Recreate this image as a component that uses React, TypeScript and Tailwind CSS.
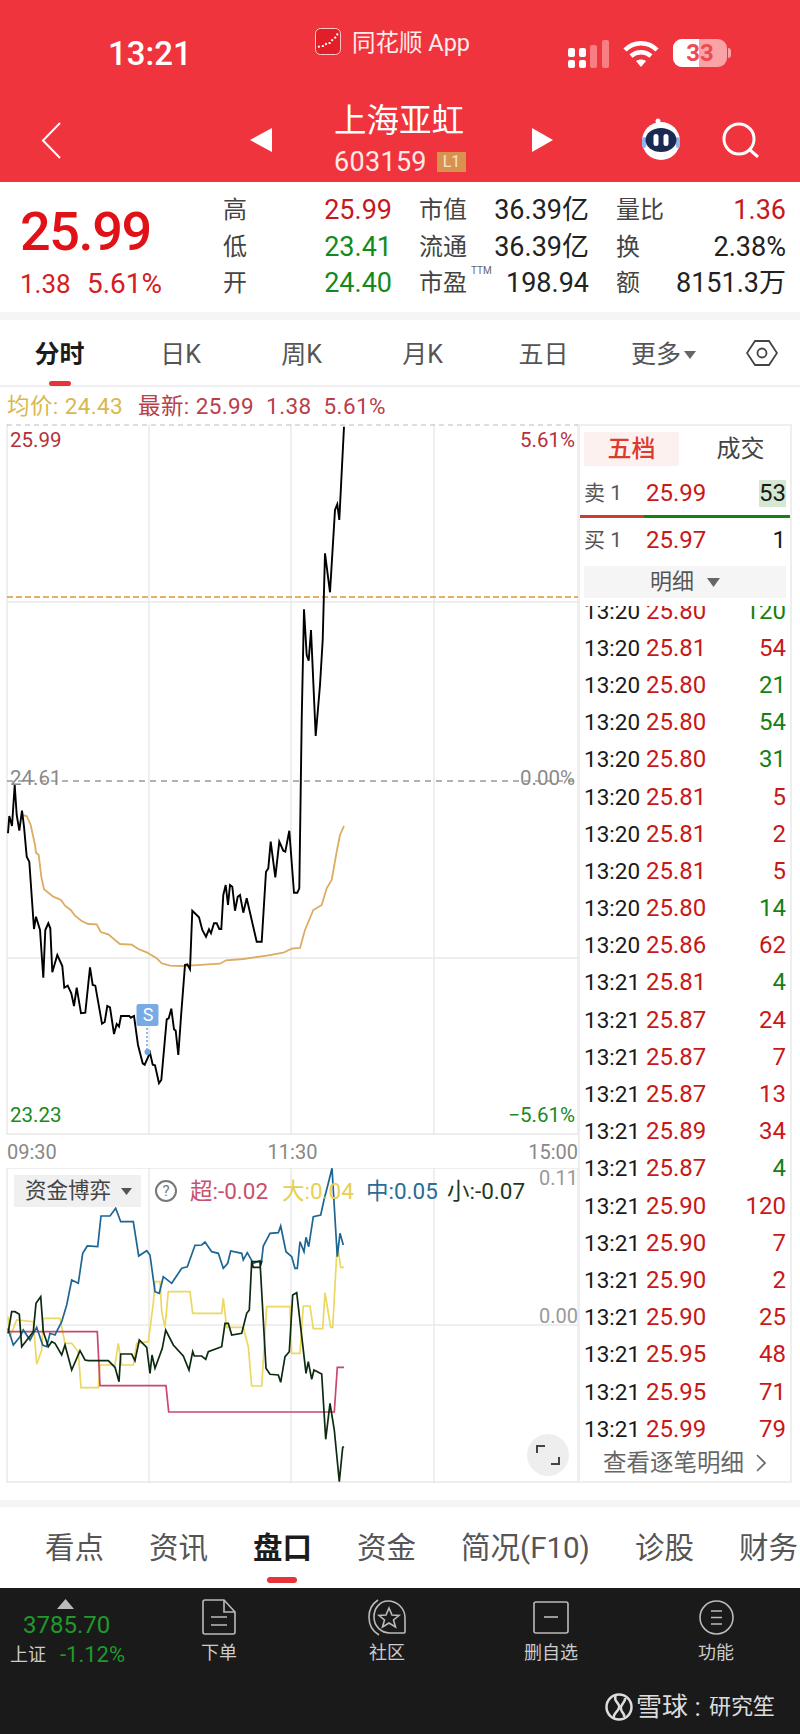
import React from 'react';

const FONT = 'font-["Roboto","Noto_Sans_CJK_SC",sans-serif]';

// traced from the picture, [x, y] in 3x crop coordinates
type Pt = number[];
const toPts = (arr: Pt[], oy: number) => arr.map(([x, y]) => `${(x / 3).toFixed(1)},${(y / 3 + oy).toFixed(1)}`).join(' ');

const priceLow: Pt[] = [[24,340],[28,288],[36,318],[44,195],[50,285],[58,332],[66,272],[72,320],[80,410],[88,425],[102,627],[108,590],[120,630],[130,773],[136,630],[145,610],[151,625],[157,757],[172,705],[187,738],[193,803],[203,797],[214,820],[222,858],[230,803],[243,880],[256,878],[270,742],[278,795],[286,797],[306,911],[314,906],[322,858],[330,862],[342,942],[350,912],[357,920],[363,888],[388,888],[392,893],[402,888],[414,975],[428,1030],[434,1034],[450,998],[458,1034],[465,1036],[477,1090],[484,1080],[500,898],[506,895],[514,866],[522,928],[527,932],[535,1005],[543,890],[555,735],[562,733],[570,748],[577,572],[597,592],[607,630],[618,650],[627,628],[633,640],[642,610],[650,610],[658,627],[664,627],[670,525],[677,495],[684,555],[690,495],[697,500],[705,572],[713,530],[720,525],[730,578],[740,535],[770,665],[785,665],[798,455],[805,445],[812,365],[826,472],[838,365],[850,392],[856,395],[868,332],[882,518],[892,518],[898,505],[905,0]];
const priceHigh: Pt[] = [[905,1200],[912,868],[920,1005],[926,1022],[933,930],[947,1248],[960,1095],[968,960],[975,700],[990,817],[1005,570],[1012,553],[1018,600],[1032,320]];
const avgLine: Pt[] = [[66,285],[80,288],[92,315],[105,375],[108,398],[116,405],[124,470],[132,508],[160,530],[183,540],[195,557],[212,570],[225,587],[245,603],[265,612],[290,613],[302,636],[325,643],[345,660],[360,672],[395,674],[415,687],[440,697],[470,715],[485,730],[510,737],[550,738],[580,736],[660,731],[678,721],[730,717],[800,707],[850,698],[875,686],[900,684],[915,630],[940,570],[965,555],[980,505],[995,480],[1010,395],[1020,345],[1032,318]];

const flowBlue: Pt[] = [[24,625],[40,675],[60,650],[70,630],[90,660],[110,622],[128,675],[140,680],[150,640],[165,645],[185,605],[200,555],[215,480],[235,490],[248,400],[262,378],[293,380],[303,288],[330,288],[347,265],[362,305],[400,305],[416,408],[440,392],[450,405],[465,515],[478,520],[490,470],[515,490],[545,445],[562,440],[585,376],[605,375],[615,366],[635,395],[655,400],[670,445],[683,430],[692,393],[725,400],[730,420],[742,398],[760,430],[785,420],[790,378],[810,340],[835,338],[842,318],[858,395],[875,410],[885,445],[892,445],[900,365],[912,395],[918,352],[926,380],[940,290],[962,285],[972,240],[985,190],[996,145],[1012,410],[1020,340],[1030,375]];
const flowYellow: Pt[] = [[24,590],[30,650],[50,600],[100,605],[110,733],[125,690],[130,595],[180,595],[195,670],[215,670],[235,695],[243,803],[295,803],[300,735],[345,735],[355,670],[365,735],[400,735],[410,670],[445,665],[460,550],[465,485],[480,485],[485,575],[495,622],[505,515],[570,515],[578,580],[665,580],[670,535],[680,622],[730,622],[745,680],[755,798],[785,798],[800,560],[870,560],[875,700],[900,700],[910,558],[930,558],[940,626],[968,626],[975,518],[992,622],[998,622],[1012,370],[1022,442],[1032,442]];
const flowPink: Pt[] = [[24,635],[292,635],[300,797],[498,797],[506,876],[1003,876],[1012,742],[1032,742]];
const flowBlack: Pt[] = [[24,640],[35,575],[45,575],[58,583],[65,680],[100,635],[108,550],[122,530],[130,635],[145,680],[155,665],[165,670],[185,705],[195,675],[215,750],[240,692],[255,720],[265,722],[325,722],[345,742],[357,785],[362,702],[395,702],[405,722],[418,660],[440,682],[450,760],[456,705],[465,745],[487,685],[497,630],[520,675],[550,708],[567,750],[578,695],[583,708],[605,708],[617,718],[625,695],[665,680],[675,610],[685,610],[695,645],[725,640],[740,580],[748,570],[755,425],[785,425],[780,442],[760,442],[755,425],[780,425],[798,745],[810,763],[835,765],[842,787],[855,710],[868,695],[878,525],[890,518],[918,760],[925,725],[935,778],[942,750],[965,762],[977,958],[990,850],[1003,930],[1018,1085],[1028,982],[1032,980]];

const ticks: [string, string, string, 'r' | 'g'][] = [
  ['13:20','25.80','120','g'],['13:20','25.81','54','r'],['13:20','25.80','21','g'],['13:20','25.80','54','g'],
  ['13:20','25.80','31','g'],['13:20','25.81','5','r'],['13:20','25.81','2','r'],['13:20','25.81','5','r'],
  ['13:20','25.80','14','g'],['13:20','25.86','62','r'],['13:21','25.81','4','g'],['13:21','25.87','24','r'],
  ['13:21','25.87','7','r'],['13:21','25.87','13','r'],['13:21','25.89','34','r'],['13:21','25.87','4','g'],
  ['13:21','25.90','120','r'],['13:21','25.90','7','r'],['13:21','25.90','2','r'],['13:21','25.90','25','r'],
  ['13:21','25.95','48','r'],['13:21','25.95','71','r'],['13:21','25.99','79','r'],
];

function Header() {
  return (
    <div className="bg-[#f0343d] h-[182px] text-white">
      <div className="flex h-[100px] items-start">
        <span className="ml-[108px] mt-[36px] w-[207px] text-[33px] leading-[36px] font-medium">13:21</span>
        <svg width="26" height="27" viewBox="0 0 26 27" className="mt-[28px]">
          <rect x="0.5" y="0.5" width="25" height="26" rx="5" fill="#e21e28" stroke="#ffc9c9" />
          <path d="M3 19l3-1 3 0 3-3 3 0 3-4 3-2 2-4" stroke="#fff" strokeWidth="2" strokeDasharray="2 2" fill="none" />
        </svg>
        <span className="ml-[11px] mt-[28px] w-[216px] text-[23.5px] leading-[30px] text-[#ffecec]">同花顺 App</span>
        <svg width="42" height="28" viewBox="0 0 42 28" className="mt-[40px]">
          <rect x="0" y="8" width="7" height="9" rx="2" fill="#fff" />
          <rect x="11" y="8" width="7" height="9" rx="2" fill="#fff" />
          <rect x="0" y="20" width="7" height="8" rx="2" fill="#fff" />
          <rect x="11" y="20" width="7" height="8" rx="2" fill="#fff" />
          <rect x="22" y="5" width="7" height="23" rx="2" fill="#f77f84" />
          <rect x="34" y="0" width="7" height="28" rx="2" fill="#f77f84" />
        </svg>
        <svg width="36" height="28" viewBox="0 0 36 28" className="ml-[13px] mt-[40px]" fill="none" stroke="#fff" strokeWidth="4.5">
          <path d="M2 10c9-9 23-9 32 0" />
          <path d="M8 16c6-5 14-5 20 0" />
          <path d="M18 27l-5-6c3-2 7-2 10 0z" fill="#fff" stroke="none" />
        </svg>
        <div className="ml-[14px] mt-[39px] flex items-center">
          <div className="relative w-[54px] h-[28px] rounded-[9px] bg-[#f9a3a7] overflow-hidden">
            <div className="w-[26px] h-full bg-white" />
            <span className="absolute inset-0 flex items-center justify-center text-[24px] font-bold text-[#ee4a52]">33</span>
          </div>
          <div className="ml-[1px] w-[3px] h-[10px] rounded-r bg-[#f9a3a7]" />
        </div>
      </div>
      <div className="flex items-start h-[82px]">
        <svg width="20" height="37" viewBox="0 0 20 37" className="ml-[41px] mt-[22px]" fill="none" stroke="#fff" strokeWidth="2">
          <path d="M19 1L2 18.5 19 36" />
        </svg>
        <svg width="22" height="24" viewBox="0 0 22 24" className="ml-[189px] mt-[28px]"><path d="M22 0v24L0 12z" fill="#fff" /></svg>
        <div className="ml-[62px] w-[132px]">
          <div className="mt-[1px] h-[41px] text-[32.5px] leading-[40px] whitespace-nowrap">上海亚虹</div>
          <div className="flex items-center mt-[9px] h-[22px]">
            <span className="w-[103px] text-[27px] leading-[22px] text-[#ffe8e8] tracking-[0.3px]">603159</span>
            <span className="w-[29px] h-[20px] bg-[#d9924e] text-[#f8e3cb] text-[16px] leading-[20px] text-center">L1</span>
          </div>
        </div>
        <svg width="21" height="24" viewBox="0 0 21 24" className="ml-[66px] mt-[28px]"><path d="M0 0v24L21 12z" fill="#fff" /></svg>
        <svg width="46" height="42" viewBox="0 0 46 42" className="ml-[85px] mt-[18px]">
          <circle cx="20" cy="3" r="2.5" fill="#fff" />
          <path d="M20 3l3 6" stroke="#fff" strokeWidth="1.5" />
          <circle cx="23" cy="23" r="19" fill="#fff" />
          <rect x="4" y="19" width="4" height="11" rx="2" fill="#8fb5ec" />
          <rect x="38" y="19" width="4" height="11" rx="2" fill="#8fb5ec" />
          <ellipse cx="23" cy="22" rx="15.5" ry="12" fill="#1b2a52" />
          <rect x="15.5" y="16" width="5" height="12" rx="2.5" fill="#fff" />
          <rect x="25.5" y="16" width="5" height="12" rx="2.5" fill="#fff" />
        </svg>
        <svg width="38" height="36" viewBox="0 0 38 36" className="ml-[38px] mt-[22px]" fill="none" stroke="#fff" strokeWidth="3">
          <circle cx="17" cy="17" r="15" />
          <path d="M28 28l8 7" />
        </svg>
      </div>
    </div>
  );
}

function Stat({ label, value, color, sup }: { label: string; value: string; color: string; sup?: boolean }) {
  return (
    <div className="relative flex items-center justify-between h-[36.5px]">
      <span className="text-[24px] leading-[30px] text-[#444]">{label}</span>
      {sup && <span className="absolute left-[52px] top-[0px] text-[10px] leading-[12px] text-[#666]">TTM</span>}
      <span className={`text-[27px] leading-[30px] ${color}`}>{value}</span>
    </div>
  );
}

function Quote() {
  return (
    <div className="flex h-[130px] bg-white">
      <div className="w-[223px] pl-[20px]">
        <div className="mt-[20px] h-[60px] text-[54px] leading-[60px] font-medium tracking-[-1.4px] text-[#e01218]">25.99</div>
        <div className="flex items-baseline mt-[6px] leading-[32px] text-[#d3201f]">
          <span className="w-[67px] text-[26px]">1.38</span>
          <span className="text-[28px]">5.61%</span>
        </div>
      </div>
      <div className="grid grid-cols-[169px_170px_170px] gap-x-[27px] pt-[10px] h-[120px]">
        <div>
          <Stat label="高" value="25.99" color="text-[#c41a1e]" />
          <Stat label="低" value="23.41" color="text-[#138a1e]" />
          <Stat label="开" value="24.40" color="text-[#138a1e]" />
        </div>
        <div>
          <Stat label="市值" value="36.39亿" color="text-[#222]" />
          <Stat label="流通" value="36.39亿" color="text-[#222]" />
          <Stat label="市盈" value="198.94" color="text-[#222]" sup />
        </div>
        <div>
          <Stat label="量比" value="1.36" color="text-[#c41a1e]" />
          <Stat label="换" value="2.38%" color="text-[#222]" />
          <Stat label="额" value="8151.3万" color="text-[#222]" />
        </div>
      </div>
    </div>
  );
}

function PeriodTabs() {
  const tabs = ['分时', '日K', '周K', '月K', '五日'];
  return (
    <div className="flex h-[67px] bg-white border-b-2 border-[#f0f0f0]">
      {tabs.map((t, i) => (
        <div key={t} className="relative w-[121px] flex items-start justify-center pt-[19px] pr-[2px]">
          <span className={i === 0 ? 'text-[25px] leading-[32px] font-bold text-[#1c1c1c]' : 'text-[25px] leading-[32px] text-[#555]'}>{t}</span>
          {i === 0 && <div className="absolute left-[49px] top-[61px] w-[22px] h-[5px] rounded-full bg-[#e5343a]" />}
        </div>
      ))}
      <div className="flex items-start pt-[19px] w-[141px] pl-[26px]">
        <span className="text-[25px] leading-[32px] text-[#555]">更多</span>
        <svg width="12" height="8" viewBox="0 0 12 8" className="ml-[3px] mt-[12px]"><path d="M0 0h12L6 8z" fill="#666" /></svg>
      </div>
      <svg width="32" height="28" viewBox="0 0 32 28" className="mt-[19px]" fill="none" stroke="#444" strokeWidth="1.8">
        <path d="M9 2h14l8 12-8 12H9L1 14z" />
        <circle cx="16" cy="14" r="4.5" />
      </svg>
    </div>
  );
}

function PriceChart() {
  return (
    <div className="relative h-[711px] w-[578px]">
      <svg width="578" height="711" viewBox="0 424 578 711" className="block">
        <g stroke="#e9e9e9" strokeWidth="1.4">
          <path d="M7 424V1135M149 424V1135M291 424V1135M434 424V1135M578 424V1135" />
          <path d="M7 602H578M7 958H578M7 1134H578" />
        </g>
        <path d="M7 425H578" stroke="#bbb" strokeWidth="1" strokeDasharray="5 4" />
        <path d="M7 781H578" stroke="#666" strokeWidth="1" strokeDasharray="6 5" />
        <path d="M7 597H578" stroke="#d9963a" strokeWidth="1.6" strokeDasharray="6 3" />
        <polyline points={toPts(avgLine, 720)} fill="none" stroke="#dcac62" strokeWidth="1.8" />
        <polyline points={toPts(priceLow, 720)} fill="none" stroke="#000" strokeWidth="1.9" />
        <polyline points={toPts(priceHigh, 320)} fill="none" stroke="#000" strokeWidth="1.9" />
        <path d="M147 1024V1052" stroke="#6fa4e2" strokeWidth="1.5" strokeDasharray="2 2" />
        <circle cx="147.500" cy="1052" r="3" fill="#6fa4e2" />
        <rect x="136.500" y="1004" width="22" height="22" rx="2" fill="#78aae6" />
      </svg>
      <span className="absolute left-[137px] top-[580px] w-[22px] h-[22px] text-center text-[18px] leading-[22px] text-white">S</span>
      <span className="absolute left-[10px] top-[4px] text-[20.5px] leading-[24px] text-[#b5303a]">25.99</span>
      <span className="absolute right-[3px] top-[4px] text-[20.5px] leading-[24px] text-[#b5303a]">5.61%</span>
      <span className="absolute left-[10px] top-[342px] text-[20.5px] leading-[24px] text-[#8a8a8a]">24.61</span>
      <span className="absolute right-[3px] top-[342px] text-[20.5px] leading-[24px] text-[#8a8a8a]">0.00%</span>
      <span className="absolute left-[10px] top-[679px] text-[20.5px] leading-[24px] text-[#1a8a24]">23.23</span>
      <span className="absolute right-[3px] top-[679px] text-[20.5px] leading-[24px] text-[#1a8a24]">−5.61%</span>
    </div>
  );
}

function FlowChart() {
  return (
    <div className="relative h-[315px] w-[578px]">
      <svg width="578" height="315" viewBox="0 1168 578 315" className="block">
        <g stroke="#e9e9e9" strokeWidth="1.4">
          <path d="M7 1168V1483M149 1168V1483M291 1168V1483M434 1168V1483M578 1168V1483" />
          <path d="M7 1325H578M7 1168H578M7 1482H578" />
        </g>
        <polyline points={toPts(flowYellow, 1120)} fill="none" stroke="#ecd860" strokeWidth="1.7" />
        <polyline points={toPts(flowPink, 1120)} fill="none" stroke="#c9486c" strokeWidth="1.7" />
        <polyline points={toPts(flowBlue, 1120)} fill="none" stroke="#1d6593" strokeWidth="1.7" />
        <polyline points={toPts(flowBlack, 1120)} fill="none" stroke="#0c2a10" strokeWidth="1.7" />
      </svg>
      <div className="absolute left-[14px] top-[7px] flex items-center">
        <div className="flex items-center w-[127px] h-[32px] bg-[#f0f0f0] pl-[11px]">
          <span className="text-[21.5px] leading-[32px] text-[#444] whitespace-nowrap">资金博弈</span>
          <svg width="11" height="7" viewBox="0 0 11 7" className="ml-[10px]"><path d="M0 0h11L5.500 7z" fill="#555" /></svg>
        </div>
        <div className="ml-[14px] w-[22px] h-[22px] rounded-full border-2 border-[#777] text-center text-[15px] leading-[18px] text-[#777]">?</div>
        <div className="flex text-[22.5px] leading-[28px] whitespace-nowrap">
          <span className="ml-[13px] w-[92px] text-[#c8506e]">超:-0.02</span>
          <span className="w-[84px] text-[#e6d052]">大:0.04</span>
          <span className="w-[81px] text-[#2b6c95]">中:0.05</span>
          <span className="text-[#1e3a20]">小:-0.07</span>
        </div>
      </div>
      <span className="absolute right-[0px] top-[-2px] text-[20px] leading-[24px] text-[#999]">0.11</span>
      <span className="absolute right-[0px] top-[136px] text-[20px] leading-[24px] text-[#999]">0.00</span>
      <button className="absolute left-[527px] top-[266px] w-[42px] h-[42px] rounded-full bg-[#eeeeee] flex items-center justify-center">
        <svg width="24" height="22" viewBox="0 0 24 22" fill="none" stroke="#444" strokeWidth="2">
          <path d="M1 9V2h8M23 13v7h-8" />
        </svg>
      </button>
    </div>
  );
}

function BookPanel() {
  return (
    <div className="w-[214px] h-[1059px] border-2 border-[#eeeeee] flex flex-col overflow-hidden">
      <div className="flex h-[40px] mt-[6px] pl-[4px]">
        <div className="w-[95px] h-[34px] bg-[#fdf1f0] text-center text-[24px] leading-[34px] font-medium text-[#dd3b30]">五档</div>
        <div className="w-[111px] pl-[12px] text-center text-[24px] leading-[34px] text-[#444]">成交</div>
      </div>
      <div className="flex items-center h-[42px] pl-[4px] pr-[4px]">
        <span className="w-[35px] text-[21px] leading-[30px] text-[#555] whitespace-nowrap">卖 1</span>
        <span className="ml-[27px] text-[24px] leading-[30px] text-[#c81818]">25.99</span>
        <span className="ml-auto w-[27px] bg-[#d4e8d4] text-right text-[24px] leading-[27px] text-[#1a1a1a]">53</span>
      </div>
      <div className="flex h-[3px] mt-[1px]">
        <div className="w-[64px] bg-[#d03a33]" />
        <div className="flex-1 bg-[#158015]" />
      </div>
      <div className="flex items-center h-[44px] pl-[4px] pr-[4px]">
        <span className="w-[35px] text-[21px] leading-[30px] text-[#555] whitespace-nowrap">买 1</span>
        <span className="ml-[27px] text-[24px] leading-[30px] text-[#c81818]">25.97</span>
        <span className="ml-auto text-[24px] leading-[30px] text-[#1a1a1a]">1</span>
      </div>
      <div className="flex items-center justify-center h-[32px] mx-[4px] bg-[#f5f5f5] mt-[4px]">
        <span className="text-[22px] leading-[30px] text-[#555]">明细</span>
        <svg width="13" height="9" viewBox="0 0 13 9" className="ml-[13px]"><path d="M0 0h13L6.500 9z" fill="#666" /></svg>
      </div>
      <div className="h-[839px] mt-[8px] overflow-hidden shrink-0">
        <div className="mt-[-14px] pl-[4px] pr-[4px]">
          {ticks.map(([t, p, q, c], i) => (
            <div key={i} className="flex items-center h-[37.2px]">
              <span className="w-[62px] text-[22.5px] leading-[30px] text-[#1a1a1a]">{t}</span>
              <span className="text-[24px] leading-[30px] text-[#c81818]">{p}</span>
              <span className={`ml-auto text-[24px] leading-[30px] ${c === 'r' ? 'text-[#c81818]' : 'text-[#158015]'}`}>{q}</span>
            </div>
          ))}
        </div>
      </div>
      <div className="flex items-center h-[36px] pl-[23px]">
        <span className="text-[23.5px] leading-[30px] text-[#666] whitespace-nowrap">查看逐笔明细</span>
        <svg width="10" height="18" viewBox="0 0 10 18" className="ml-[12px]" fill="none" stroke="#666" strokeWidth="1.600"><path d="M1 1l8 8-8 8" /></svg>
      </div>
    </div>
  );
}

function DetailTabs() {
  const tabs = ['看点', '资讯', '盘口', '资金', '简况(F10)', '诊股', '财务'];
  return (
    <div className="flex h-[81px] bg-white overflow-hidden pl-[45px] gap-x-[45px]">
      {tabs.map((t) => (
        <div key={t} className="relative shrink-0 pt-[22px]">
          <span className={t === '盘口' ? 'text-[29.5px] leading-[38px] font-bold text-[#1c1c1c] whitespace-nowrap' : 'text-[29.5px] leading-[38px] text-[#555] whitespace-nowrap'}>{t}</span>
          {t === '盘口' && <div className="absolute left-[14px] top-[70px] w-[30px] h-[6px] rounded-full bg-[#e5343a]" />}
        </div>
      ))}
    </div>
  );
}

function NavItem({ label, ml, children }: { label: string; ml: string; children: React.ReactNode }) {
  return (
    <div className={`w-[80px] ${ml} flex flex-col items-center`}>
      <div className="h-[40px] mt-[9px] flex items-center justify-center">{children}</div>
      <span className="mt-[4px] text-[18px] leading-[24px] text-[#cccccc] whitespace-nowrap">{label}</span>
    </div>
  );
}

function Footer() {
  return (
    <div className="h-[146px] bg-[#1a1a1a] flex flex-col">
      <div className="flex h-[92px]">
        <div className="w-[137px] pl-[10px]">
          <svg width="17" height="10" viewBox="0 0 17 10" className="ml-[47px] mt-[11px]"><path d="M8.500 0L17 10H0z" fill="#bbbbbb" /></svg>
          <div className="pl-[13px] mt-[1px] text-[24px] leading-[30px] text-[#1f9a2a]">3785.70</div>
          <div className="flex items-center mt-[2px]">
            <span className="w-[50px] text-[18px] leading-[26px] text-[#cccccc]">上证</span>
            <span className="text-[22px] leading-[26px] text-[#1f9a2a] whitespace-nowrap">-1.12%</span>
          </div>
        </div>
        <NavItem label="下单" ml="ml-[42px]">
          <svg width="34" height="36" viewBox="0 0 34 36" fill="none" stroke="#bbbbbb" strokeWidth="1.600">
            <path d="M3 1h19l11 12v20a2 2 0 0 1-2 2H3a2 2 0 0 1-2-2V3a2 2 0 0 1 2-2z" />
            <path d="M22 1v12h11M9 18h16M9 26h16" />
          </svg>
        </NavItem>
        <NavItem label="社区" ml="ml-[88px]">
          <svg width="39" height="37" viewBox="0 0 39 37" fill="none" stroke="#bbbbbb" strokeWidth="1.600">
            <path d="M20 2c9 0 17 7 17 17v14a1 1 0 0 1-1 1H22C13 34 6 27 6 18S12 2 20 2z" />
            <path d="M10 1C4 5 1 11 1 18s3 14 10 18" />
            <path d="M21 9l3 7 7 .5-5.500 4.500 2 7-6.500-4-6.500 4 2-7L11 16.500l7-.5z" />
          </svg>
        </NavItem>
        <NavItem label="删自选" ml="ml-[84px]">
          <svg width="36" height="33" viewBox="0 0 36 33" fill="none" stroke="#bbbbbb" strokeWidth="1.600">
            <rect x="1" y="1" width="34" height="31" rx="2" />
            <path d="M11 16h14" />
          </svg>
        </NavItem>
        <NavItem label="功能" ml="ml-[85px]">
          <svg width="35" height="35" viewBox="0 0 35 35" fill="none" stroke="#bbbbbb" strokeWidth="1.600">
            <circle cx="17.500" cy="17.500" r="16.500" />
            <path d="M12 11h11M12 17.500h11M12 24h11" />
          </svg>
        </NavItem>
      </div>
      <div className="flex items-center justify-end h-[40px] mt-[7px] pr-[25px]">
        <svg width="28" height="28" viewBox="0 0 28 28" fill="none" stroke="#dddddd" strokeWidth="2.500">
          <circle cx="14" cy="14" r="12.500" />
          <path d="M11 3c-4 5 5 7 3 12s-6 5-5 10M20 5c1 4-5 6-4 11s4 4 3 8" />
        </svg>
        <span className="ml-[3px] w-[73px] text-[26px] leading-[34px] text-[#dddddd] whitespace-nowrap">雪球 :</span>
        <span className="text-[22px] leading-[34px] text-[#dddddd] whitespace-nowrap">研究笙</span>
      </div>
    </div>
  );
}

export default function App() {
  return (
    <div className={`w-[800px] h-[1734px] overflow-hidden bg-white ${FONT}`}>
      <Header />
      <Quote />
      <div className="h-[8px] bg-[#f5f5f5]" />
      <PeriodTabs />
      <div className="flex items-center h-[37px] pl-[7px] text-[22.5px] leading-[28px] tracking-[0.4px] whitespace-nowrap">
        <span className="w-[131px] text-[#d9b84e]">均价: 24.43</span>
        <span className="text-[#b8404a]">最新: 25.99&nbsp; 1.38&nbsp; 5.61%</span>
      </div>
      <div className="flex h-[1059px] items-start">
        <div className="w-[578px]">
          <PriceChart />
          <div className="flex justify-between h-[33px] pl-[7px] items-center text-[20px] leading-[24px] text-[#888]">
            <span>09:30</span>
            <span>11:30</span>
            <span>15:00</span>
          </div>
          <FlowChart />
        </div>
        <BookPanel />
      </div>
      <div className="h-[17px]" />
      <div className="h-[7px] bg-[#f5f5f5]" />
      <DetailTabs />
      <Footer />
    </div>
  );
}
